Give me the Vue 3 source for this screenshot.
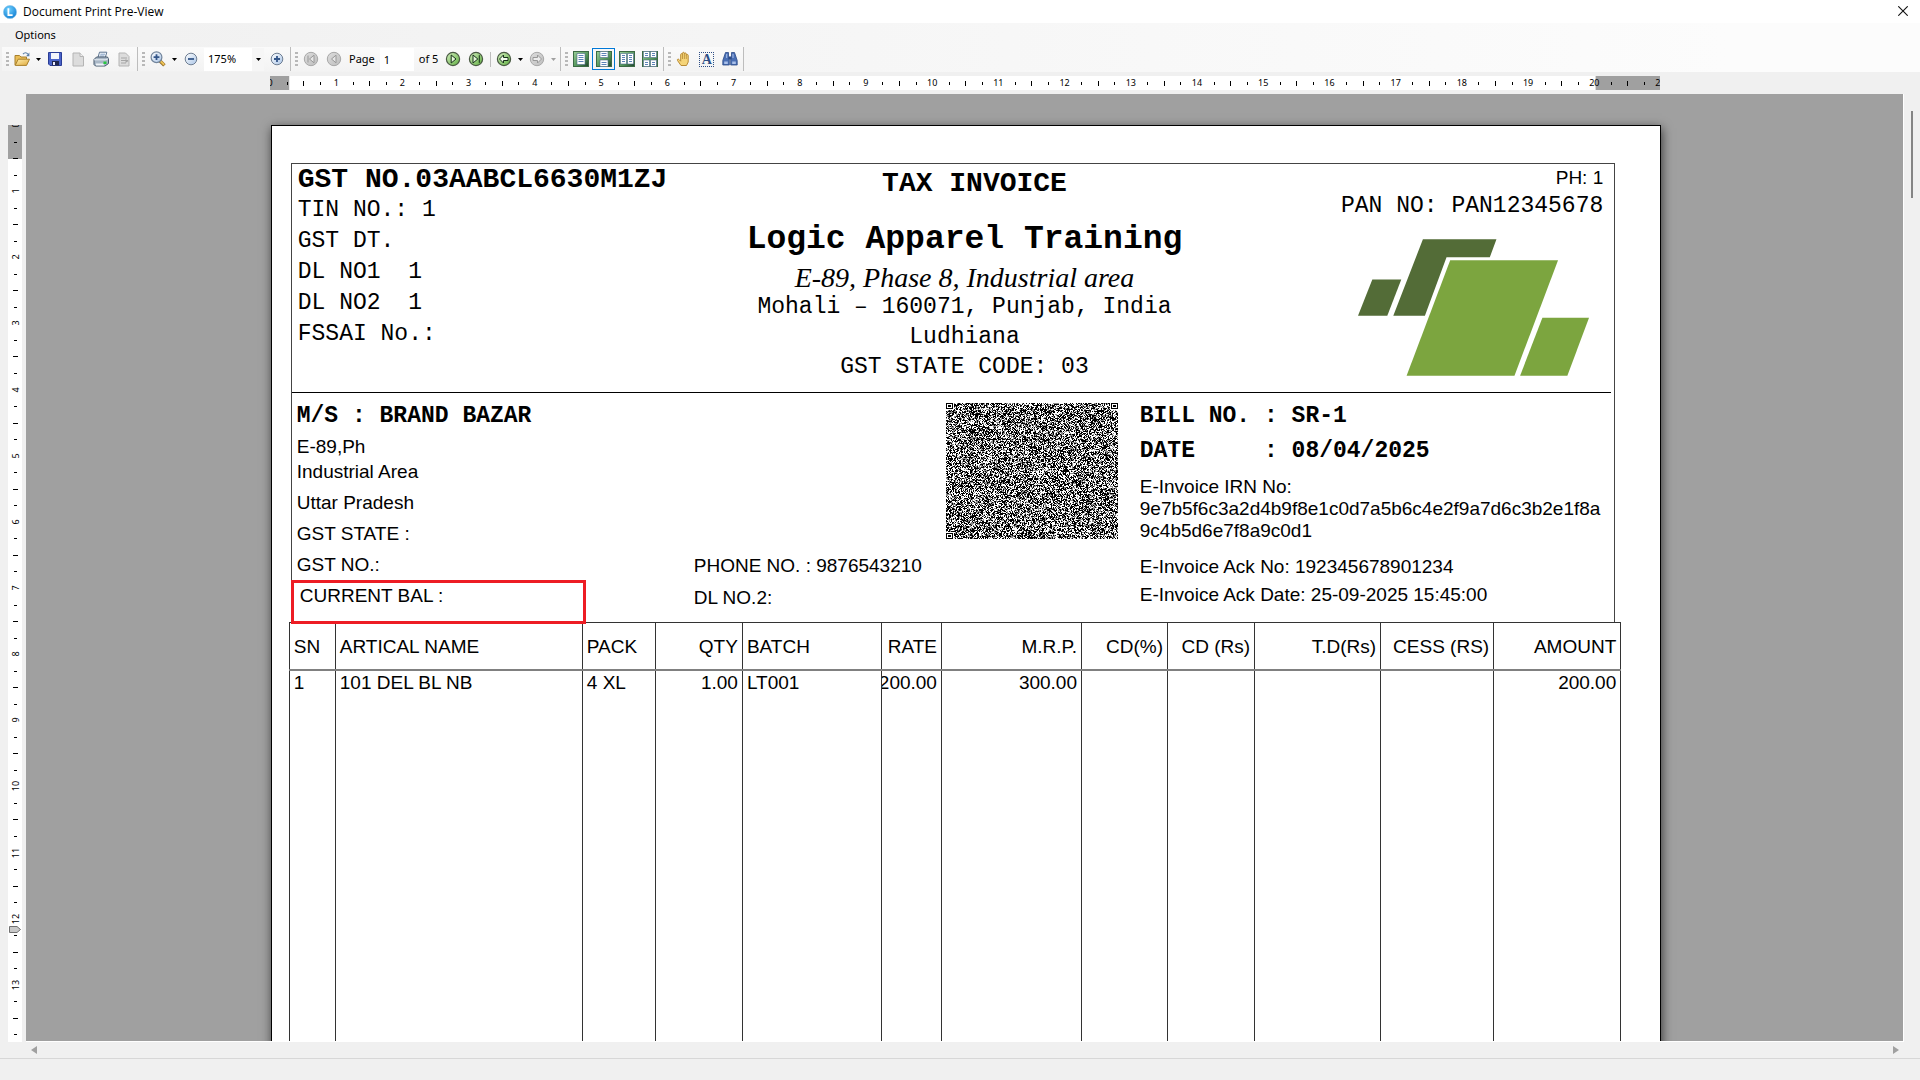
<script setup>
const SHEET_CM = 21
const PX_PER_CM = 66.14

const pct = (cm) => `${(cm / SHEET_CM) * 100}%`

const hTicks = []
for (let q = 1; q < SHEET_CM * 4; q++) {
  if (q % 4) hTicks.push({ q, x: pct(q / 4), half: q % 4 === 2 })
}
const hNumbers = Array.from({ length: SHEET_CM + 1 }, (_, n) => ({ n, x: pct(n) }))

const vTicks = []
for (let q = 1; q < 56; q++) {
  if (q % 4) vTicks.push({ q, y: Math.round((q * PX_PER_CM) / 4), half: q % 4 === 2 })
}
const vNumbers = Array.from({ length: 14 }, (_, n) => ({ n, y: Math.round(n * PX_PER_CM) }))

const columns = [
  { label: 'SN', width: 46, right: false, value: '1' },
  { label: 'ARTICAL NAME', width: 247, right: false, value: '101 DEL BL NB' },
  { label: 'PACK', width: 73, right: false, value: '4 XL' },
  { label: 'QTY', width: 87, right: true, value: '1.00' },
  { label: 'BATCH', width: 139, right: false, value: 'LT001' },
  { label: 'RATE', width: 60, right: true, value: '200.00' },
  { label: 'M.R.P.', width: 140, right: true, value: '300.00' },
  { label: 'CD(%)', width: 86, right: true, value: '' },
  { label: 'CD (Rs)', width: 87, right: true, value: '' },
  { label: 'T.D(Rs)', width: 126, right: true, value: '' },
  { label: 'CESS (RS)', width: 113, right: true, value: '' },
  { label: 'AMOUNT', width: 127, right: true, value: '200.00' },
]

// Dense e-invoice code: pseudo-random modules in two tones plus three finder squares.
const CODE_W = 172
const CODE_H = 136
function buildCode() {
  let seed = 20250925
  const rnd = () => {
    seed = (seed * 1664525 + 1013904223) >>> 0
    return seed / 4294967296
  }
  let dark = ''
  let mid = ''
  for (let y = 0; y < CODE_H; y++) {
    for (let x = 0; x < CODE_W; x++) {
      const inX = x < 8 || x >= CODE_W - 8
      const r = rnd()
      if ((inX && y < 7) || (x < 8 && y >= CODE_H - 7)) continue
      if (r < 0.43) dark += `M${x} ${y}h1v1h-1z`
      else if (r < 0.66) mid += `M${x} ${y}h1v1h-1z`
    }
  }
  return { dark, mid }
}
const code = buildCode()
const finders = [
  { x: 0, y: 0 },
  { x: CODE_W - 7, y: 0 },
  { x: 0, y: CODE_H - 6 },
]
</script>

<template>
  <div class="window">
    <svg class="defs" width="0" height="0" aria-hidden="true">
      <defs>
        <linearGradient id="gGreen" x1="0" y1="0" x2="1" y2="1">
          <stop offset="0" stop-color="#d4efc0" /><stop offset="1" stop-color="#5fae3f" />
        </linearGradient>
        <linearGradient id="gGrey" x1="0" y1="0" x2="1" y2="1">
          <stop offset="0" stop-color="#dedede" /><stop offset="1" stop-color="#bdbdbd" />
        </linearGradient>
        <linearGradient id="gBlue" x1="0" y1="0" x2="1" y2="1">
          <stop offset="0" stop-color="#ffffff" /><stop offset="1" stop-color="#a9c4e6" />
        </linearGradient>
        <linearGradient id="gView" x1="0" y1="0" x2="1" y2="1">
          <stop offset="0" stop-color="#9bd09a" /><stop offset="0.6" stop-color="#4f9155" /><stop offset="1" stop-color="#1d3f2a" />
        </linearGradient>
        <linearGradient id="gFolder" x1="0" y1="0" x2="1" y2="1">
          <stop offset="0" stop-color="#fff0b0" /><stop offset="1" stop-color="#e0a93c" />
        </linearGradient>
        <radialGradient id="gApp" cx="0.4" cy="0.3" r="0.8">
          <stop offset="0" stop-color="#6fd0ff" /><stop offset="1" stop-color="#0a78cf" />
        </radialGradient>
      </defs>
    </svg>

    <header class="titlebar">
      <svg class="app-icon" width="14" height="14" viewBox="0 0 14 14" aria-hidden="true">
        <circle cx="7" cy="7" r="6.6" fill="url(#gApp)" stroke="#8cc4ea" stroke-width="0.6" />
        <path d="M5.4 3.2v7h4.2" fill="none" stroke="#fff" stroke-width="1.8" />
      </svg>
      <h1>Document Print Pre-View</h1>
      <button class="close" aria-label="Close">
        <svg width="10" height="10" viewBox="0 0 10 10"><path d="M0.3 0.3l9.4 9.4M9.7 0.3l-9.4 9.4" stroke="#111" stroke-width="1.1" fill="none" /></svg>
      </button>
    </header>

    <nav class="menubar"><button>Options</button></nav>

    <div class="toolbar">
      <div class="group">
        <i class="grip"></i>
        <button class="tool" aria-label="Open">
          <svg width="16" height="16" viewBox="0 0 16 16">
            <path d="M1 14V4.5h4.5L7 6h5.5v2" fill="#e9bd57" stroke="#a8802c" />
            <path d="M1.2 14.4L4.2 8.2h11.3l-3 6.2z" fill="url(#gFolder)" stroke="#a8802c" />
            <path d="M9 3.2c1.6-2 3.6-1.8 4.8 0" fill="none" stroke="#5b7fa8" stroke-width="1.2" />
            <path d="M15.4 1.6v3.6h-3.4z" fill="#5b7fa8" />
          </svg>
        </button>
        <button class="drop" aria-label="Recent files"><svg width="5" height="3" viewBox="0 0 5 3"><path d="M0 0h5L2.500 3z" /></svg></button>
        <button class="tool" aria-label="Save">
          <svg width="16" height="16" viewBox="0 0 16 16">
            <path d="M1.500 1.500h13v13h-11.500l-1.500-1.500z" fill="#4a63c8" stroke="#2a3d96" />
            <path d="M4 2h8v6H4z" fill="#f4f6fb" /><path d="M5 10h7v4.500H5z" fill="#20264c" /><path d="M6 11h2v3H6z" fill="#eef" />
          </svg>
        </button>
        <button class="tool" aria-label="New page" disabled>
          <svg width="16" height="16" viewBox="0 0 16 16">
            <path d="M3 2h7l3.500 3.500V15H3z" fill="#dcdcdc" stroke="#b4b4b4" /><path d="M10 2v3.500h3.500" fill="#eee" stroke="#b4b4b4" />
          </svg>
        </button>
        <button class="tool" aria-label="Print">
          <svg width="16" height="16" viewBox="0 0 16 16">
            <path d="M5 6.500L6.500 1.200h7.300L12.300 6.500z" fill="#fbfdff" stroke="#5b7390" />
            <path d="M7.300 3.200h4.700M6.700 5h4.700" stroke="#7f9dc4" />
            <path d="M1 8.500l2.500-2.500h11l1 2v4.500L12 15H2.500L1 13.500z" fill="#a9b7c6" stroke="#46586c" />
            <path d="M1.200 8.800h11l3-1" fill="none" stroke="#e8eef4" /><path d="M3 12.500h7l1.500 2H3z" fill="#eef3f8" />
            <path d="M10.500 10.500h3v2.500h-3z" fill="#27c83f" />
          </svg>
        </button>
        <button class="tool" aria-label="Page setup" disabled>
          <svg width="16" height="16" viewBox="0 0 16 16">
            <path d="M3 2h6.500l3.500 3.500V15H3z" fill="#dcdcdc" stroke="#b4b4b4" /><path d="M5 7h6M5 9.500h7M5 12h5" stroke="#a6a6a6" /><path d="M9.500 8l3 2-3 2z" fill="#a6a6a6" />
          </svg>
        </button>
      </div>

      <div class="group">
        <i class="grip"></i>
        <button class="tool" aria-label="Zoom tool">
          <svg width="16" height="16" viewBox="0 0 16 16">
            <path d="M9.800 9.800l4.600 4.600" stroke="#8e6a24" stroke-width="3.400" /><path d="M10 9.600l4.200 4.200" stroke="#edc256" stroke-width="2" />
            <circle cx="6.500" cy="6.200" r="5.400" fill="url(#gBlue)" stroke="#72859c" stroke-width="1.200" />
            <path d="M3.600 6.200h5.800M6.500 3.300v5.800" stroke="#34568a" stroke-width="1.800" />
          </svg>
        </button>
        <button class="drop" aria-label="Zoom modes"><svg width="5" height="3" viewBox="0 0 5 3"><path d="M0 0h5L2.500 3z" /></svg></button>
        <button class="tool" aria-label="Zoom out">
          <svg width="16" height="16" viewBox="0 0 16 16"><circle cx="8" cy="8" r="5.800" fill="url(#gBlue)" stroke="#6f7f93" /><path d="M5 8h6" stroke="#34568a" stroke-width="1.800" /></svg>
        </button>
        <div class="zoom-box">
          <select aria-label="Zoom level"><option>175%</option><option>100%</option></select>
          <svg width="5" height="3" viewBox="0 0 5 3" aria-hidden="true"><path d="M0 0h5L2.500 3z" /></svg>
        </div>
        <button class="tool" aria-label="Zoom in">
          <svg width="16" height="16" viewBox="0 0 16 16"><circle cx="8" cy="8" r="5.800" fill="url(#gBlue)" stroke="#6f7f93" /><path d="M5 8h6M8 5v6" stroke="#34568a" stroke-width="1.800" /></svg>
        </button>
      </div>

      <div class="group">
        <i class="grip"></i>
        <button class="tool" aria-label="First page" disabled>
          <svg width="16" height="16" viewBox="0 0 16 16"><circle cx="8" cy="8" r="6.700" fill="url(#gGrey)" stroke="#a8a8a8" /><path d="M5 4.500v7M11 4.200v7.600L6.500 8z" fill="#e6e6e6" stroke="#999" /></svg>
        </button>
        <button class="tool" aria-label="Previous page" disabled>
          <svg width="16" height="16" viewBox="0 0 16 16"><circle cx="8" cy="8" r="6.700" fill="url(#gGrey)" stroke="#a8a8a8" /><path d="M10 4.200v7.600L5.500 8z" fill="#e6e6e6" stroke="#999" /></svg>
        </button>
        <label class="page-label" for="page-no">Page</label>
        <input id="page-no" class="page-no" type="text" value="1" />
        <span class="page-total">of 5</span>
        <button class="tool" aria-label="Next page">
          <svg width="16" height="16" viewBox="0 0 16 16"><circle cx="8" cy="8" r="6.600" fill="url(#gGreen)" stroke="#4a5a44" stroke-width="1.200" /><path d="M6.200 4v8L11 8z" fill="#e4f7d8" stroke="#16301a" /></svg>
        </button>
        <button class="tool" aria-label="Last page">
          <svg width="16" height="16" viewBox="0 0 16 16"><circle cx="8" cy="8" r="6.600" fill="url(#gGreen)" stroke="#4a5a44" stroke-width="1.200" /><path d="M5 4v8L9.800 8zM11.300 4.200v7.600" fill="#e4f7d8" stroke="#16301a" /></svg>
        </button>
        <i class="split"></i>
        <button class="tool" aria-label="Back">
          <svg width="16" height="16" viewBox="0 0 16 16"><circle cx="8" cy="8" r="6.600" fill="url(#gGreen)" stroke="#4a5a44" stroke-width="1.200" /><path d="M3.500 8l4-4v2.500h4.500v3H7.500V12z" fill="#f2fbec" stroke="#16301a" /></svg>
        </button>
        <button class="drop" aria-label="Back history"><svg width="5" height="3" viewBox="0 0 5 3"><path d="M0 0h5L2.500 3z" /></svg></button>
        <button class="tool" aria-label="Forward" disabled>
          <svg width="16" height="16" viewBox="0 0 16 16"><circle cx="8" cy="8" r="6.700" fill="url(#gGrey)" stroke="#a8a8a8" /><path d="M12.500 8l-4-4v2.500H4v3h4.500V12z" fill="#ececec" stroke="#999" /></svg>
        </button>
        <button class="drop" aria-label="Forward history" disabled><svg width="5" height="3" viewBox="0 0 5 3"><path d="M0 0h5L2.500 3z" /></svg></button>
      </div>

      <div class="group">
        <i class="grip"></i>
        <button class="tool" aria-label="Single page">
          <svg width="16" height="16" viewBox="0 0 16 16"><rect x="0.500" y="0.500" width="15" height="15" fill="url(#gView)" stroke="#3c6b45" /><path d="M4 2.500h8v11H4z" fill="#fff" stroke="#4a6a8c" stroke-width="0.600" /><path d="M5.500 4.500h5M5.500 6.500h5M5.500 8.500h5M5.500 10.500h5" stroke="#5c82b8" /></svg>
        </button>
        <button class="tool selected" aria-label="Continuous pages" aria-pressed="true">
          <svg width="16" height="16" viewBox="0 0 16 16"><rect x="0.500" y="0.500" width="15" height="15" fill="url(#gView)" stroke="#3c6b45" /><path d="M4 0.500h8v6H4zM4 9h8v6.500H4z" fill="#fff" stroke="#4a6a8c" stroke-width="0.600" /><path d="M5.500 2.500h5M5.500 4.500h5M5.500 11.500h5M5.500 13.500h5" stroke="#5c82b8" /></svg>
        </button>
        <button class="tool" aria-label="Facing pages">
          <svg width="16" height="16" viewBox="0 0 16 16"><rect x="0.500" y="0.500" width="15" height="15" fill="url(#gView)" stroke="#3c6b45" /><path d="M1.500 2.500h6v10.500h-6zM8.500 2.500h6v10.500h-6z" fill="#fff" stroke="#4a6a8c" stroke-width="0.600" /><path d="M3 4.500h3M3 6.500h3M3 8.500h3M3 10.500h3M10 4.500h3M10 6.500h3M10 8.500h3M10 10.500h3" stroke="#5c82b8" /></svg>
        </button>
        <button class="tool" aria-label="Continuous facing pages">
          <svg width="16" height="16" viewBox="0 0 16 16"><rect x="0.500" y="0.500" width="15" height="15" fill="url(#gView)" stroke="#3c6b45" /><path d="M1.500 0.500h6v6h-6zM8.500 0.500h6v6h-6zM1.500 9h6v6.500h-6zM8.500 9h6v6.500h-6z" fill="#fff" stroke="#4a6a8c" stroke-width="0.600" /><path d="M3 2.500h3M3 4.500h3M10 2.500h3M10 4.500h3M3 11.500h3M3 13.500h3M10 11.500h3M10 13.500h3" stroke="#5c82b8" /></svg>
        </button>
      </div>

      <div class="group">
        <i class="grip"></i>
        <button class="tool" aria-label="Pan">
          <svg width="16" height="16" viewBox="0 0 16 16"><path d="M5 14.500L1.500 9.500c-.6-1.400.8-1.800 1.600-.9l1.600 1.600V3.600c0-1.300 1.700-1.300 1.800 0V2.300c0-1.300 1.900-1.300 1.900 0v.6c.1-1.300 1.900-1.200 1.900.1v1.200c.2-1.100 1.900-1 1.900.2V11l-1.700 3.500z" fill="#f5d478" stroke="#b88a34" /><path d="M6.500 4v4M8.400 3v5M10.300 4v4" stroke="#b88a34" stroke-width="0.800" /></svg>
        </button>
        <button class="tool select-text" aria-label="Select text"><span>A</span></button>
        <button class="tool" aria-label="Find">
          <svg width="16" height="16" viewBox="0 0 16 16">
            <path d="M3.500 1.500h3v3.500l.8 3.500v5.500H.8V9.500zM9.500 1.500h3l2.700 8v4.500H8.700V8.500L9.500 5z" fill="#4a6fb4" stroke="#2b4a86" stroke-width="0.800" />
            <path d="M6.500 5.500h3v3h-3z" fill="#2b4a86" />
            <path d="M2.200 10.500h3.600v2.500H2.200zM10.200 10.500h3.600v2.500h-3.600zM4.200 3h1v4h-1zM10.500 3h1v4h-1z" fill="#a9c0ea" />
          </svg>
        </button>
      </div>
    </div>

    <main class="workspace">
      <div class="h-ruler">
        <svg class="h-scale" height="14" aria-hidden="true">
          <rect x="0" y="0" width="100%" height="14" fill="#fff" />
          <rect x="0" y="0" :width="pct(0.29)" height="14" fill="#a0a0a0" />
          <rect :x="pct(20.02)" y="0" width="5%" height="14" fill="#a0a0a0" />
          <rect v-for="t in hTicks" :key="t.q" :x="t.x" :y="t.half ? 5 : 6" width="1" :height="t.half ? 5 : 3" fill="#000" shape-rendering="crispEdges" />
          <text v-for="m in hNumbers" :key="m.n" :x="m.x" y="10" text-anchor="middle">{{ m.n }}</text>
        </svg>
      </div>

      <div class="v-ruler">
        <svg class="v-scale" width="14" aria-hidden="true">
          <rect x="0" y="0" width="14" height="100%" fill="#fff" />
          <rect x="0" y="0" width="14" height="34" fill="#a0a0a0" />
          <rect v-for="t in vTicks" :key="t.q" :x="t.half ? 5 : 6" :y="t.y" :width="t.half ? 5 : 3" height="1" fill="#000" />
          <text v-for="m in vNumbers" :key="m.n" text-anchor="middle" :transform="`translate(11 ${m.y}) rotate(-90)`">{{ m.n }}</text>
          <path d="M1.500 801.500h7.500l3.500 3-3.500 3H1.500z" fill="#c8c8c8" stroke="#707070" />
        </svg>
      </div>

      <section class="viewport">
        <article class="sheet">
          <div class="frame">
            <header class="letterhead">
              <div class="registration mono">
                <p class="gst-no">GST NO.03AABCL6630M1ZJ</p>
                <p>TIN NO.: 1</p>
                <p>GST DT.</p>
                <p>DL NO1&nbsp; 1</p>
                <p>DL NO2&nbsp; 1</p>
                <p>FSSAI No.:</p>
              </div>
              <div class="company mono">
                <h2>TAX INVOICE</h2>
                <h3>Logic Apparel Training</h3>
                <p class="street">E-89, Phase 8, Industrial area</p>
                <p>Mohali – 160071, Punjab, India</p>
                <p>Ludhiana</p>
                <p>GST STATE CODE: 03</p>
              </div>
              <div class="contact">
                <p class="phone">PH: 1</p>
                <p class="mono">PAN NO: PAN12345678</p>
                <svg class="logo" width="231" height="137" viewBox="473 268 694 410" role="img" aria-label="Company logo">
                  <path d="M516 389H603L561 498H473z" fill="#536c37" />
                  <path d="M668 268H889L869 322H739L674 498H579z" fill="#536c37" />
                  <path d="M750 331H1074L943 678H619z" fill="#7ca53f" />
                  <path d="M1027 504H1167L1102 678H960z" fill="#7ca53f" />
                </svg>
              </div>
            </header>

            <section class="details">
              <div class="party">
                <p class="mono strong">M/S : BRAND BAZAR</p>
                <p class="address">E-89,Ph<br />Industrial Area</p>
                <p>Uttar Pradesh</p>
                <p>GST STATE :</p>
                <p>GST NO.:</p>
                <p class="balance">CURRENT BAL :</p>
              </div>
              <div class="party-contact">
                <p>PHONE NO. : 9876543210</p>
                <p>DL NO.2:</p>
              </div>
              <svg class="code" width="172" height="136" viewBox="0 0 172 136" shape-rendering="crispEdges" role="img" aria-label="E-invoice code">
                <path :d="code.mid" fill="#8a8a8a" />
                <path :d="code.dark" fill="#000" />
                <g v-for="(f, i) in finders" :key="i">
                  <rect :x="f.x" :y="f.y" width="7" height="6" fill="#000" />
                  <rect :x="f.x + 1" :y="f.y + 1" width="5" height="4" fill="#fff" />
                  <rect :x="f.x + 2" :y="f.y + 2" width="3" height="2" fill="#000" />
                </g>
              </svg>
              <div class="bill">
                <pre class="mono strong">BILL NO. : SR-1
DATE     : 08/04/2025</pre>
                <p class="irn">E-Invoice IRN No:<br />9e7b5f6c3a2d4b9f8e1c0d7a5b6c4e2f9a7d6c3b2e1f8a9c4b5d6e7f8a9c0d1</p>
                <p>E-Invoice Ack No: 192345678901234</p>
                <p>E-Invoice Ack Date: 25-09-2025 15:45:00</p>
              </div>
            </section>
          </div>

          <table class="items">
            <colgroup><col v-for="c in columns" :key="c.label" :width="c.width" /></colgroup>
            <thead>
              <tr><th v-for="c in columns" :key="c.label" scope="col"><div :class="{ right: c.right }">{{ c.label }}</div></th></tr>
            </thead>
            <tbody>
              <tr><td v-for="c in columns" :key="c.label"><div :class="{ right: c.right }">{{ c.value }}</div></td></tr>
            </tbody>
          </table>
        </article>
      </section>

      <div class="v-scroll"><i></i></div>

      <div class="h-scroll">
        <button aria-label="Scroll left"><svg width="6" height="8" viewBox="0 0 6 8"><path d="M6 0v8L0 4z" /></svg></button>
        <button aria-label="Scroll right"><svg width="6" height="8" viewBox="0 0 6 8"><path d="M0 0v8l6-4z" /></svg></button>
      </div>
    </main>

    <footer class="statusbar"></footer>
  </div>
</template>

<style>
body {
  margin: 0;
  overflow: hidden;
}
</style>

<style scoped>
.window {
  display: flex;
  flex-direction: column;
  height: 100vh;
  background: #f0f0f0;
  color: #000;
  font: 12px/16px "Noto Sans", "Open Sans", sans-serif;
}
.defs {
  position: absolute;
}
h1,
h2,
h3,
p,
pre {
  margin: 0;
  font-weight: 400;
}
button {
  padding: 0;
  border: 0;
  background: none;
  color: inherit;
  font: inherit;
}

.titlebar {
  display: flex;
  align-items: center;
  height: 23px;
  padding: 0 12px 0 3px;
  background: #fff;
}
.titlebar h1 {
  flex: 1;
  margin-left: 6px;
  font: 12px/16px "Open Sans", "Noto Sans", sans-serif;
}
.close {
  display: flex;
  padding-bottom: 2px;
}
.menubar {
  display: flex;
  align-items: center;
  height: 24px;
  padding-left: 15px;
  background: linear-gradient(90deg, #f0f0f0, #fcfcfc 90%);
}
.menubar button {
  font-size: 11px;
}

.toolbar {
  display: flex;
  height: 25px;
  padding-left: 2px;
  background: linear-gradient(90deg, #f0f0f0, #fcfcfc 90%);
}
.group {
  display: flex;
  align-items: center;
  height: 24px;
  padding-right: 2px;
  border-right: 1px solid #bdbdbd;
  background: linear-gradient(#fafafa, #f3f3f3);
}
.grip {
  width: 3px;
  height: 15px;
  margin: 0 1px 0 4px;
  background: repeating-linear-gradient(#b8b8b8 0 2px, transparent 2px 4px);
}
.tool {
  display: flex;
  align-items: center;
  justify-content: center;
  width: 23px;
  height: 22px;
}
.selected {
  border: 1px solid #0078d7;
}
.drop {
  display: flex;
  align-items: center;
  justify-content: center;
  width: 10px;
  height: 22px;
}
.drop:disabled path {
  fill: #a0a0a0;
}
.zoom-box {
  position: relative;
  margin: 0 1px 0 2px;
}
.zoom-box select {
  appearance: none;
  width: 60px;
  height: 23px;
  padding: 0 0 0 4px;
  border: 0;
  border-radius: 0;
  background: linear-gradient(90deg, #fff 48px, #f6f6f6 48px);
  color: #000;
  font: 11px/16px "Noto Sans", "Open Sans", sans-serif;
}
.zoom-box svg {
  position: absolute;
  top: 10px;
  right: 3px;
  pointer-events: none;
}
.page-label {
  padding: 0 5px 0 4px;
  font-size: 11px;
}
.page-no {
  box-sizing: border-box;
  width: 34px;
  height: 23px;
  padding: 0 0 0 4px;
  border: 0;
  background: #fff;
  color: #000;
  font: 11px/16px "Noto Sans", "Open Sans", sans-serif;
}
.page-total {
  padding: 0 3px 0 5px;
  font-size: 11px;
}
.split {
  width: 1px;
  height: 15px;
  margin: 0 1px 0 3px;
  background: #bdbdbd;
}
.select-text span {
  width: 13px;
  height: 13px;
  border: 1px dotted #2f4f86;
  color: #2f4f86;
  font: bold 14px/14px "Liberation Serif", serif;
}

.workspace {
  flex: 1;
  min-height: 0;
  display: grid;
  grid-template: 22px minmax(0, 1fr) 16px / 26px minmax(0, 1fr) 16px;
}
.h-ruler {
  grid-area: 1 / 2;
  display: flex;
  justify-content: center;
  padding: 4px 2px 0;
}
.h-scale {
  width: 74.2%;
  overflow: hidden;
}
.h-scale text,
.v-scale text {
  font: 9px "Noto Sans", "Open Sans", sans-serif;
}
.v-ruler {
  grid-area: 2 / 1;
  padding: 31px 0 0 8px;
  overflow: hidden;
}
.v-scale {
  display: block;
  height: 100%;
}
.viewport {
  grid-area: 2 / 2;
  display: flex;
  justify-content: center;
  align-items: flex-start;
  padding: 31px 0 0 3px;
  border-right: 1px solid #fff;
  border-bottom: 1px solid #fff;
  background: #a0a0a0;
  overflow: hidden;
}
.v-scroll {
  grid-area: 2 / 3;
  padding: 17px 0 0 7px;
}
.v-scroll i {
  display: block;
  width: 2px;
  height: 87px;
  background: #858585;
}
.h-scroll {
  grid-area: 3 / 2;
  display: flex;
  justify-content: space-between;
  padding: 0 5px;
}
.h-scroll button {
  display: flex;
  align-items: center;
}
.h-scroll path {
  fill: #a0a0a0;
}
.statusbar {
  height: 21px;
  border-top: 1px solid #d7d7d7;
}

.sheet {
  box-sizing: border-box;
  flex: none;
  width: 74.2%;
  aspect-ratio: 210 / 297;
  padding: 37px 39px 0 17px;
  border: 1px solid #000;
  background: #fff;
  box-shadow: 1px 3px 10px rgba(0, 0, 0, 0.65);
  font: 19px/31px "Liberation Sans", Arial, sans-serif;
}
.mono {
  font-family: "Liberation Mono", "Courier New", monospace;
  font-size: 23px;
}
.strong {
  font-weight: 700;
}
.frame {
  margin: 0 6px 0 2px;
  border: 1px solid #444;
  border-bottom: 0;
}
.letterhead {
  display: grid;
  grid-template-columns: 430px minmax(0, 1fr) 404px;
  height: 228px;
  margin-right: 3px;
  border-bottom: 1px solid #000;
}
.registration {
  padding-left: 6px;
}
.registration .gst-no {
  font-size: 28px;
  font-weight: 700;
}
.company {
  line-height: 30px;
  text-align: center;
  white-space: nowrap;
}
.company h2 {
  padding-left: 20px;
  font-size: 28px;
  font-weight: 700;
  line-height: 40px;
}
.company h3 {
  margin-top: 16px;
  font-size: 33px;
  font-weight: 700;
  line-height: 40px;
}
.company .street {
  margin-top: 4px;
  font: italic 28px/28px "Liberation Serif", "Times New Roman", serif;
}
.contact {
  padding-right: 8px;
  line-height: 28px;
  text-align: right;
}
.logo {
  display: block;
  margin: 19px 14px 0 auto;
}

.details {
  display: grid;
  grid-template-columns: 402px 252px 172px minmax(0, 1fr);
  height: 229px;
}
.party {
  padding: 8px 0 0 5px;
}
.address {
  margin: 2px 0 3px;
  line-height: 25px;
}
.balance {
  position: relative;
  padding-left: 3px;
}
.balance::after {
  content: "";
  position: absolute;
  top: 0;
  left: -6px;
  box-sizing: border-box;
  width: 295px;
  height: 44px;
  border: 3px solid #ed1c24;
}
.party-contact {
  align-self: end;
  padding-bottom: 8px;
  line-height: 32px;
}
.code {
  margin-top: 10px;
}
.bill {
  padding: 6px 6px 0 22px;
  line-height: 28px;
}
.bill pre {
  line-height: 35px;
}
.bill .irn {
  margin: 7px 0 11px;
  line-height: 22px;
  word-break: break-all;
}

.items {
  width: 100%;
  height: 1200px;
  border-collapse: collapse;
  table-layout: fixed;
  line-height: 22px;
}
.items th,
.items td {
  padding: 1px 0 0;
  border: 1px solid #333;
  font-weight: 400;
  text-align: left;
  vertical-align: top;
}
.items th {
  height: 44px;
  padding-top: 2px;
  border-bottom: 2px solid #808080;
  vertical-align: middle;
}
.items div {
  display: flex;
  padding: 0 4px;
  overflow: hidden;
  white-space: nowrap;
}
.items .right {
  justify-content: flex-end;
  padding-left: 0;
}
</style>
